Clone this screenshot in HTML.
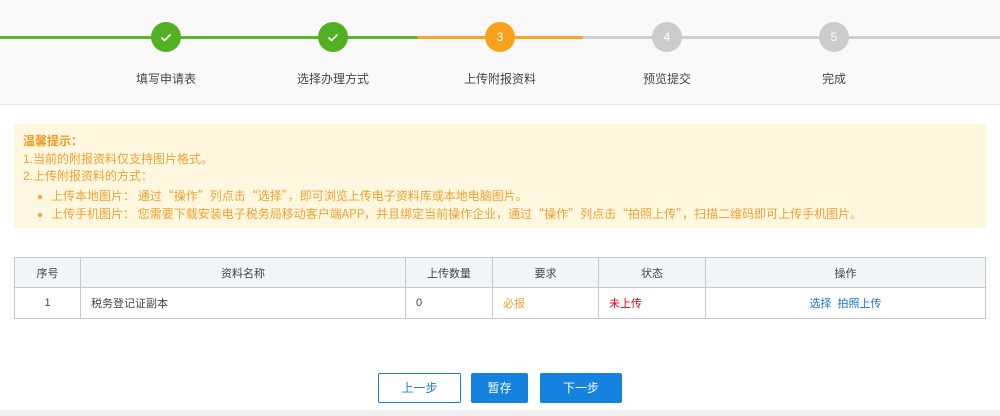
<!DOCTYPE html>
<html><head><meta charset="utf-8"><style>
*{margin:0;padding:0;box-sizing:border-box}
body{width:1000px;height:416px;background:#fff;font-family:"Liberation Sans","Noto Sans CJK SC",sans-serif;font-size:12px;position:relative;overflow:hidden;color:#333}
.hdr{position:absolute;left:0;top:0;width:1000px;height:105px;background:#f9f9f9;border-bottom:1px solid #e6e6e6}
.ln{position:absolute;top:36px;height:3px}
.c{position:absolute;top:22px;width:30px;height:30px;border-radius:50%;color:#fff;text-align:center;line-height:30px;font-size:12px}
.lb{position:absolute;top:70px;width:120px;text-align:center;font-size:12px;color:#444}
.tip{position:absolute;left:14px;top:124px;width:972px;height:104px;background:#fef8e1;color:#f0a030;font-size:12px;padding:9px 0 0 9px;line-height:17.5px}
.tip b{font-weight:bold;color:#ef9a1e}
.tip ul{margin-top:1px}
.tip li{margin-left:28px;list-style:none;position:relative;font-family:"Noto Sans CJK SC",sans-serif;line-height:18px}
.tip li:before{content:"";position:absolute;left:-13px;top:8px;width:4px;height:4px;border-radius:50%;background:#f0a030}
table{position:absolute;left:14px;top:257px;width:972px;border-collapse:collapse;font-size:11px;color:#444}
td,th{border:1px solid #c8c8c8;height:31px;font-weight:normal;text-align:center}
th{background:#f2f4f7;height:30px}
.bt{position:absolute;top:373px;height:30px;line-height:28px;text-align:center;font-size:12px;border-radius:2px}
</style></head><body>
<div class="hdr">
<div class="ln" style="left:0;width:417px;background:#5cb531"></div>
<div class="ln" style="left:417px;width:166px;background:#f5a623"></div>
<div class="ln" style="left:583px;width:417px;background:#cfcfcf"></div>
<div class="c" style="left:151px;background:#52b023"><svg width="30" height="30" viewBox="0 0 30 30"><path d="M10.5 15.5l3 3 6-6" stroke="#fff" stroke-width="1.6" fill="none"/></svg></div>
<div class="c" style="left:318px;background:#52b023"><svg width="30" height="30" viewBox="0 0 30 30"><path d="M10.5 15.5l3 3 6-6" stroke="#fff" stroke-width="1.6" fill="none"/></svg></div>
<div class="c" style="left:485px;background:#f7a11c">3</div>
<div class="c" style="left:652px;background:#cccccc">4</div>
<div class="c" style="left:819px;background:#cccccc">5</div>
<div class="lb" style="left:106px">填写申请表</div>
<div class="lb" style="left:273px">选择办理方式</div>
<div class="lb" style="left:440px">上传附报资料</div>
<div class="lb" style="left:607px">预览提交</div>
<div class="lb" style="left:774px">完成</div>
</div>
<div class="tip"><b>温馨提示：</b><br>1.当前的附报资料仅支持图片格式。<br>2.上传附报资料的方式：
<ul><li>上传本地图片： 通过“操作”列点击“选择”，即可浏览上传电子资料库或本地电脑图片。</li>
<li>上传手机图片： 您需要下载安装电子税务局移动客户端APP，并且绑定当前操作企业，通过“操作”列点击“拍照上传”，扫描二维码即可上传手机图片。</li></ul></div>
<table>
<tr><th style="width:66px">序号</th><th style="width:325px">资料名称</th><th style="width:87px">上传数量</th><th style="width:106px">要求</th><th style="width:107px">状态</th><th>操作</th></tr>
<tr><td>1</td><td style="text-align:left;padding-left:10px">税务登记证副本</td><td style="text-align:left;padding-left:10px">0</td><td style="text-align:left;padding-left:10px;color:#f0a030">必报</td><td style="text-align:left;padding-left:10px;color:#d9001b">未上传</td><td style="color:#1a73c8">选择&nbsp; 拍照上传</td></tr>
</table>
<div class="bt" style="left:378px;width:83px;border:1px solid #1a7fd4;color:#1a7fd4;background:#fff">上一步</div>
<div class="bt" style="left:471px;width:57px;background:#1682e0;color:#fff;border:1px solid #1682e0">暂存</div>
<div class="bt" style="left:540px;width:82px;background:#1682e0;color:#fff;border:1px solid #1682e0">下一步</div>
<div style="position:absolute;left:0;top:410px;width:1000px;height:6px;background:#f2f2f2"></div>
</body></html>
